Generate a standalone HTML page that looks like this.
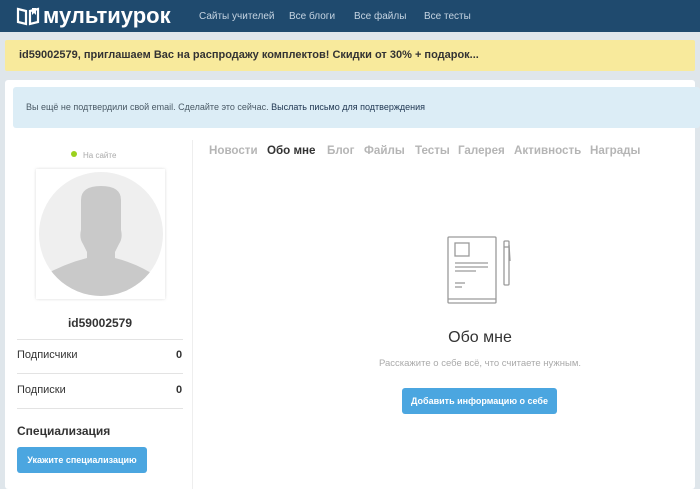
<!DOCTYPE html>
<html><head><meta charset="utf-8"><style>
*{margin:0;padding:0;box-sizing:border-box}
body{width:700px;height:489px;overflow:hidden;background:#dfe6eb;font-family:"Liberation Sans","DejaVu Sans",sans-serif;position:relative}
.a{position:absolute;white-space:nowrap}
.t{position:absolute;top:144px;font-size:11.6px;font-weight:bold;color:#b5b5b5;white-space:nowrap}
</style></head><body>
<div class="a" style="left:0;top:0;width:700px;height:32px;background:#1f4a6e"></div>
<svg class="a" style="left:16px;top:6px" width="24" height="20" viewBox="0 0 24 20"><path d="M2 3 L10 5 L10 18 L2 16 Z M22 3 L14 5 L14 18 L22 16 Z" fill="none" stroke="#fff" stroke-width="2.2"/><path d="M16 2 L16 9 L18 7 L20 9 L20 2" fill="#fff"/></svg>
<div class="a" style="left:43px;top:3px;color:#fff;font-weight:bold;font-size:22px;letter-spacing:0">мультиурок</div>
<div class="a" style="left:199px;top:11px;color:#c5d4e2;font-size:10px">Сайты учителей</div>
<div class="a" style="left:289px;top:11px;color:#c5d4e2;font-size:10px">Все блоги</div>
<div class="a" style="left:354px;top:11px;color:#c5d4e2;font-size:10px">Все файлы</div>
<div class="a" style="left:424px;top:11px;color:#c5d4e2;font-size:10px">Все тесты</div>
<div class="a" style="left:5px;top:40px;width:690px;height:31px;background:#f8ea9c;border-radius:2px"></div>
<div class="a" style="left:19px;top:49px;font-size:11px;font-weight:bold;color:#333">id59002579, приглашаем Вас на распродажу комплектов! Скидки от 30% + подарок...</div>
<div class="a" style="left:5px;top:80px;width:690px;height:409px;background:#fff;border-radius:3px"></div>
<div class="a" style="left:13px;top:87px;width:687px;height:41px;background:#dcedf6;border-radius:3px"></div>
<div class="a" style="left:26px;top:102px;font-size:9px;color:#4a5a66">Вы ещё не подтвердили свой email. Сделайте это сейчас. <span style="color:#1e3550">Выслать письмо для подтверждения</span></div>
<div class="a" style="left:192px;top:140px;width:1px;height:349px;background:#eee"></div>
<div class="a" style="left:71px;top:151px;width:6px;height:6px;border-radius:50%;background:#9bd11e"></div>
<div class="a" style="left:83px;top:151px;font-size:8px;color:#aaa">На сайте</div>
<div class="a" style="left:36px;top:169px;width:129px;height:130px;background:#fff;box-shadow:0 0 3px rgba(0,0,0,.15)"></div>
<svg class="a" style="left:39px;top:172px" width="124" height="124" viewBox="0 0 124 124"><defs><clipPath id="c"><circle cx="62" cy="62" r="62"/></clipPath></defs><circle cx="62" cy="62" r="62" fill="#efefef"/><g clip-path="url(#c)" fill="#c9c9c9"><path d="M42 28 Q42 14 62 14 Q82 14 82 28 L82 58 Q84 66 80 72 L76 80 L76 86 Q100 92 120 106 L120 130 L0 130 L0 106 Q24 92 48 86 L48 80 L44 72 Q40 66 42 58 Z"/></g></svg>
<div class="a" style="left:17px;top:316px;width:166px;text-align:center;font-size:12px;font-weight:bold;color:#333">id59002579</div>
<div class="a" style="left:17px;top:339px;width:166px;height:1px;background:#e3e3e3"></div>
<div class="a" style="left:17px;top:349px;font-size:11px;color:#333">Подписчики</div>
<div class="a" style="left:176px;top:349px;font-size:11px;font-weight:bold;color:#333">0</div>
<div class="a" style="left:17px;top:373px;width:166px;height:1px;background:#e3e3e3"></div>
<div class="a" style="left:17px;top:384px;font-size:11px;color:#333">Подписки</div>
<div class="a" style="left:176px;top:384px;font-size:11px;font-weight:bold;color:#333">0</div>
<div class="a" style="left:17px;top:408px;width:166px;height:1px;background:#e3e3e3"></div>
<div class="a" style="left:17px;top:424px;font-size:12px;font-weight:bold;color:#333">Специализация</div>
<div class="a" style="left:17px;top:447px;width:130px;height:26px;background:#4ba6e0;border-radius:3px;color:#fff;font-size:9px;font-weight:bold;text-align:center;line-height:26px">Укажите специализацию</div>
<div class="t" style="left:209px">Новости</div>
<div class="t" style="left:267px;color:#333">Обо мне</div>
<div class="t" style="left:327px">Блог</div>
<div class="t" style="left:364px">Файлы</div>
<div class="t" style="left:415px">Тесты</div>
<div class="t" style="left:458px">Галерея</div>
<div class="t" style="left:514px">Активность</div>
<div class="t" style="left:590px">Награды</div>
<svg class="a" style="left:446px;top:235px" width="70" height="72" viewBox="0 0 70 72"><g fill="none" stroke="#9a9a9a" stroke-width="1.3"><rect x="2" y="2" width="48" height="66" rx="1"/><line x1="2" y1="64" x2="50" y2="64"/><rect x="9" y="8" width="14" height="13"/><line x1="9" y1="28" x2="42" y2="28"/><line x1="9" y1="32" x2="42" y2="32"/><line x1="9" y1="36" x2="30" y2="36"/><line x1="9" y1="48" x2="19" y2="48"/><line x1="9" y1="52" x2="16" y2="52"/><rect x="58" y="6" width="5" height="44" rx="1"/><line x1="58" y1="12" x2="63" y2="12"/><line x1="63" y1="10" x2="64" y2="26"/></g></svg>
<div class="a" style="left:350px;top:329px;width:260px;text-align:center;font-size:16px;color:#333">Обо мне</div>
<div class="a" style="left:350px;top:358px;width:260px;text-align:center;font-size:9.5px;color:#aaa">Расскажите о себе всё, что считаете нужным.</div>
<div class="a" style="left:402px;top:388px;width:155px;height:26px;background:#4ba6e0;border-radius:3px;color:#fff;font-size:9px;font-weight:bold;text-align:center;line-height:26px">Добавить информацию о себе</div>
</body></html>
